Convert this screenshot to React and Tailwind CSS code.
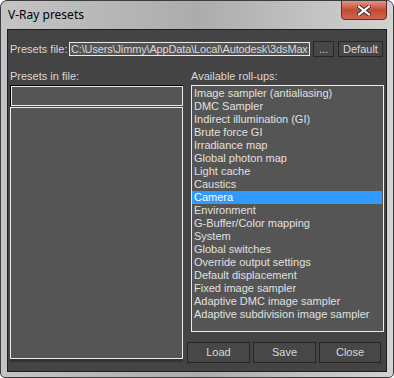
import React from 'react';

const rollups = [
  "Image sampler (antialiasing)",
  "DMC Sampler",
  "Indirect illumination (GI)",
  "Brute force GI",
  "Irradiance map",
  "Global photon map",
  "Light cache",
  "Caustics",
  "Camera",
  "Environment",
  "G-Buffer/Color mapping",
  "System",
  "Global switches",
  "Override output settings",
  "Default displacement",
  "Fixed image sampler",
  "Adaptive DMC image sampler",
  "Adaptive subdivision image sampler",
];

function MaxButton({ children, className = "" }) {
  return (
    <div className={`flex items-center justify-center border border-[#262626] bg-[#474747] text-[#d8d8d8] ${className}`}>
      {children}
    </div>
  );
}

export default function App() {
  const selected = "Camera";

  return (
    <div
      className="w-[394px] h-[378px] overflow-hidden rounded-t-[7px] rounded-b-[5px] border border-[#3c3c3c] flex flex-col bg-gradient-to-r from-[#c4c4c4] via-[#acacac] to-[#d2d2d2]"
      style={{ fontFamily: '"Liberation Sans", Arial, sans-serif' }}
    >
      {/* title bar */}
      <div className="h-[28px] shrink-0 flex items-start justify-between">
        <span
          className="pl-[7px] pt-[6px] text-[12px] text-black leading-[16px]"
          style={{ fontFamily: '"Noto Sans", "Open Sans", sans-serif' }}
        >
          V-Ray presets
        </span>
        <div className="mr-[6px] mt-[-1px] w-[46px] h-[20px] rounded-b-[4px] border border-[#6b2a20] bg-gradient-to-b from-[#e0958a] via-[#c24a35] to-[#d0654f] flex items-center justify-center">
          <svg width="14" height="11" viewBox="0 0 14 11">
            <path d="M2 1.5 L12 9.5 M12 1.5 L2 9.5" stroke="#3a2a2a" strokeWidth="4" strokeLinecap="square" />
            <path d="M2 1.5 L12 9.5 M12 1.5 L2 9.5" stroke="#ffffff" strokeWidth="2.2" strokeLinecap="square" />
          </svg>
        </div>
      </div>

      {/* client area */}
      <div className="mx-[6px] h-[343px] shrink-0 border border-[#1f1f1f] bg-[#444444] text-[11px] text-[#d8d8d8] flex flex-col px-[2px] pt-[11px]">
        <div className="flex items-center h-[16px]">
          <span className="w-[59px] shrink-0 leading-[13px]">Presets file:</span>
          <div className="w-[241px] h-[14px] shrink-0 border border-[#e8e8e8] bg-[#555555] overflow-hidden whitespace-nowrap leading-[12px] pl-[1px] tracking-[-0.15px]">
            C:\Users\Jimmy\AppData\Local\Autodesk\3dsMax
          </div>
          <MaxButton className="ml-[3px] w-[21px] h-[16px] leading-[12px]">...</MaxButton>
          <MaxButton className="ml-[4px] w-[45px] h-[16px] leading-[12px]">Default</MaxButton>
        </div>

        <div className="flex mt-[13px]">
          {/* left column */}
          <div className="w-[173px] shrink-0 flex flex-col">
            <span className="leading-[13px] h-[14px]">Presets in file:</span>
            <div className="mt-[1px] border-t border-l border-black">
              <div className="h-[20px] border border-[#ececec] bg-[#555555]" />
            </div>
            <div className="mt-[1px] h-[255px] border-b-[3px] border-[#333333]">
              <div className="h-[252px] border border-[#ececec] bg-[#555555]" />
            </div>
          </div>

          {/* right column */}
          <div className="ml-[4px] flex-1 flex flex-col">
            <span className="ml-[4px] leading-[13px] h-[14px]">Available roll-ups:</span>
            <div className="ml-[4px] mt-[1px] h-[247px] border border-[#ececec] bg-[#555555] pt-[1px] pr-[1px]">
              {rollups.map((r) => (
                <div
                  key={r}
                  className={`h-[13px] leading-[13px] pl-[2px] whitespace-nowrap ${r === selected ? "bg-[#3399ff] text-white" : "text-[#e0e0e0]"}`}
                >
                  {r}
                </div>
              ))}
            </div>
            <div className="mt-[10px] flex gap-[3px]">
              <MaxButton className="w-[63px] h-[21px]">Load</MaxButton>
              <MaxButton className="w-[63px] h-[21px]">Save</MaxButton>
              <MaxButton className="w-[62px] h-[21px]">Close</MaxButton>
            </div>
          </div>
        </div>
      </div>
    </div>
  );
}
